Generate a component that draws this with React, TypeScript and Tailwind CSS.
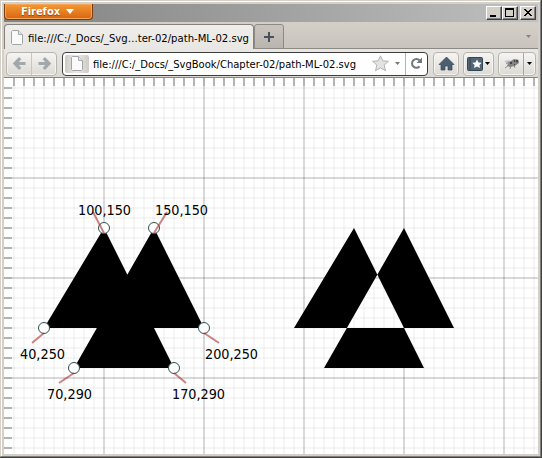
import React from "react";

const range = (n: number) => Array.from({ length: n }, (_, i) => i + 1);
const shape = "M100,150 L170,290 L70,290 L150,150 L200,250 L40,250 Z";
const points = [
  { x: 100, y: 150, lx: 89, ly: 134, label: "100,150", tx: 74, ty: 137 },
  { x: 150, y: 150, lx: 163, ly: 134, label: "150,150", tx: 151, ty: 137 },
  { x: 40, y: 250, lx: 28, ly: 265, label: "40,250", tx: 16, ty: 281 },
  { x: 200, y: 250, lx: 215, ly: 265, label: "200,250", tx: 201, ty: 281 },
  { x: 70, y: 290, lx: 55, ly: 305, label: "70,290", tx: 43, ty: 321 },
  { x: 170, y: 290, lx: 182, ly: 305, label: "170,290", tx: 168, ty: 321 },
];

function PageIcon() {
  return (
    <svg width="12" height="15" viewBox="0 0 12 15" className="shrink-0">
      <path d="M1.500.5h6l4 4v9l-1 1h-9l-1-1v-12z" fill="#fafafa" stroke="#a0a4a7" />
      <path d="M7.500.5v4h4" fill="#e3e3e3" stroke="#a8abad" />
    </svg>
  );
}

function Address({ text, width }: { text: string; width: number }) {
  return (
    <svg width={width} height="16" className="shrink-0">
      <text x="0" y="12" textLength={width} lengthAdjust="spacingAndGlyphs" className="fill-black font-['DejaVu_Sans_Condensed','DejaVu_Sans',sans-serif] text-[11px]">
        {text}
      </text>
    </svg>
  );
}

function Caret({ className = "" }: { className?: string }) {
  return (
    <svg width="5" height="3" viewBox="0 0 5 3" className={`shrink-0 ${className}`}>
      <path d="M0 0h5L2.5 3z" fill="currentColor" />
    </svg>
  );
}

function Arrow({ flip }: { flip?: boolean }) {
  return (
    <svg width="13" height="13" viewBox="0 0 13 13" className={flip ? "-scale-x-100" : ""}>
      <path d="M7.200 1.200 1.900 6.500l5.300 5.300M2.500 6.500H12.500" fill="none" stroke="#a4a7a9" strokeWidth="3.200" />
    </svg>
  );
}

function WindowButton({ children, className = "" }: { children: React.ReactNode; className?: string }) {
  return (
    <div className={`h-[14px] w-4 border border-t-white border-l-white border-r-[#404040] border-b-[#404040] bg-[#d4d0c8] shadow-[inset_-1px_-1px_#808080] ${className}`}>
      <svg width="14" height="12" viewBox="0 0 14 12" shapeRendering="crispEdges">{children}</svg>
    </div>
  );
}

const button = "flex h-6 items-center rounded-[4px] border border-[#b8b5af] bg-linear-to-b from-[#f6f5f3] to-[#dddad5] shadow-[inset_0_0_0_1px_#f4f3f0]";

function Canvas() {
  return (
    <svg width="534" height="376" viewBox="0 0 534 376" className="block bg-white">
      <g stroke="#000" strokeOpacity=".075">
        {range(53).map((i) => <path key={i} d={`M${i * 10} 0V376`} />)}
        {range(37).map((i) => <path key={i} d={`M0 ${i * 10}H534`} />)}
      </g>
      <g stroke="#000" strokeOpacity=".16" strokeWidth="1.5">
        {range(5).map((i) => <path key={i} d={`M${i * 100} 0V376`} />)}
        {range(3).map((i) => <path key={i} d={`M0 ${i * 100}H534`} />)}
      </g>
      <g stroke="#b3b3b3" strokeWidth="2">
        {range(53).map((i) => <path key={i} d={`M${i * 10} 0v8`} />)}
        {range(37).map((i) => <path key={i} d={`M0 ${i * 10}h8`} />)}
      </g>
      <path d={shape} />
      <path d={shape} transform="translate(250 0)" fillRule="evenodd" />
      {points.map((p) => (
        <g key={p.label}>
          <circle cx={p.x} cy={p.y} r="5.5" fill="white" stroke="#2f4f4f" />
          <path d={`M${p.x} ${p.y + 5}L${p.lx} ${p.ly}`} stroke="#a52a2a" strokeOpacity=".58" strokeWidth="2" />
          <text x={p.tx} y={p.ty} textLength={p.label.length === 7 ? 53 : 45} lengthAdjust="spacingAndGlyphs" className="fill-black font-['DejaVu_Sans_Condensed','DejaVu_Sans',sans-serif] text-[14.5px]">{p.label}</text>
        </g>
      ))}
    </svg>
  );
}

export default function App() {
  return (
    <div className="h-[458px] w-[542px] border-r border-b border-[#404040] bg-[#d4d0c8]">
      <div className="flex h-[457px] w-[541px] flex-col border-t border-r border-b border-l border-t-[#d4d0c8] border-l-[#d4d0c8] border-r-[#808080] border-b-[#808080]">
        <div className="flex h-[455px] flex-col border-t border-l border-white pt-[2px] pl-[2px] pr-[2px] pb-[2px]">
          <header className="flex h-[18px] justify-between bg-linear-to-r from-[#828282] to-[#c0c0c0]">
            <div className="flex h-4 w-[89px] items-center justify-center gap-[6px] rounded-b-[4px] border border-t-0 border-[#7b3d0d] bg-linear-to-b from-[#f49a32] to-[#d86410] pr-[2px] shadow-[inset_0_0_0_1px_#f4a55a]">
              <span className="font-['DejaVu_Sans_Condensed','DejaVu_Sans',sans-serif] text-[11px] leading-4 font-bold text-white [text-shadow:0_1px_1px_#8a4510]">Firefox</span>
              <svg width="8" height="5" viewBox="0 0 8 5" className="-mt-px"><path d="M0 0h8L4 5z" fill="white" /></svg>
            </div>
            <div className="flex pt-[2px] pr-[2px]">
              <WindowButton><path d="M3 8h6v2H3z" /></WindowButton>
              <WindowButton><path d="M2.5 1.5h8v8h-8zM2 2.5h9" fill="none" stroke="black" /></WindowButton>
              <WindowButton className="ml-[2px]"><path d="m3.5 2 7 7m0-7-7 7" stroke="black" strokeWidth="1.6" /></WindowButton>
            </div>
          </header>
          <div className="flex h-[27px] items-end bg-linear-to-b from-[#d4d0c8] to-[#c8c4bd] pt-[2px] shadow-[inset_0_-1px_#8d8a85]">
            <div className="flex h-[25px] w-[250px] items-center gap-[5px] rounded-t-[4px] border border-b-0 border-[#85827d] bg-linear-to-b from-[#efeeeb] to-[#e9e7e3] pl-[6px]">
              <PageIcon />
              <div className="pt-px"><Address text="file:///C:/_Docs/_Svg…ter-02/path-ML-02.svg" width={221} /></div>
            </div>
            <div className="flex h-[25px] w-[30px] items-center justify-center rounded-t-[3px] border border-[#8d8a85] bg-linear-to-b from-[#cac6bf] to-[#b9b5ae]">
              <svg width="10" height="10"><path d="M5 0v10M0 5h10" stroke="#46515d" strokeWidth="2" /></svg>
            </div>
            <Caret className="mr-[7px] mb-[11px] ml-auto text-[#85827d]" />
          </div>
          <div className="flex h-[29px] items-center bg-linear-to-b from-[#e9e7e3] to-[#dcd9d3] pl-[2px] shadow-[inset_0_-1px_#858585]">
            <div className={`${button} w-[51px]`}>
              <div className="flex h-full w-[25px] items-center justify-center border-r border-[#c8c5c0]"><Arrow /></div>
              <div className="flex flex-1 justify-center"><Arrow flip /></div>
            </div>
            <div className="ml-[5px] flex h-6 w-[366px] items-center rounded-[4px] border border-[#3d3d3d] bg-white pl-[2px]">
              <div className="mr-1 flex h-[18px] w-6 items-center justify-center rounded-[2px] bg-linear-to-r from-[#cecbc6] via-[#eceae7] to-[#cecbc6]"><PageIcon /></div>
              <div className="pt-px"><Address text="file:///C:/_Docs/_SvgBook/Chapter-02/path-ML-02.svg" width={263} /></div>
              <svg width="17" height="17" viewBox="0 0 17 17" className="ml-4"><path d="m8.500.8 2.300 5 5.600.5-4.200 3.700 1.300 5.800-5-3-5 3L4.800 10 .6 6.300l5.600-.5z" fill="#e3e3e3" stroke="#b3b3b3" /></svg>
              <Caret className="ml-[6px] text-[#777]" />
              <div className="ml-[5px] flex h-full flex-1 items-center justify-center border-l border-[#b2b2b2]">
                <svg width="13" height="13" viewBox="0 0 13 13"><path d="M9.600 9.500A4.400 4.400 0 1 1 9.600 3.300" fill="none" stroke="#72777a" strokeWidth="2" /><path d="M12 .5v5.500H6.500z" fill="#72777a" /></svg>
              </div>
            </div>
            <div className={`${button} ml-[5px] w-[26px] justify-center`}>
              <svg width="17" height="16" viewBox="0 0 17 16"><path d="M8.500 1 16 8.500H14V14h-4v-4H7v4H3V8.500H1z" fill="#4b5f70" stroke="#344454" strokeWidth=".7" /></svg>
            </div>
            <div className={`${button} ml-1 w-[31px] justify-center gap-[2px]`}>
              <svg width="16" height="14" viewBox="0 0 16 14"><rect x=".5" y=".5" width="15" height="13" rx="1" fill="#526675" stroke="#344553" /><path d="M3 1v12" stroke="#344553" /><path d="m10 2.500 1.500 2.900 3.200.3-2.300 2.200.6 3.200-3-1.600-3 1.600.6-3.200-2.300-2.200 3.200-.3z" fill="white" /></svg>
              <Caret className="text-black" />
            </div>
            <div className={`${button} ml-1 w-[38px]`}>
              <div className="flex h-full w-[25px] items-center justify-center border-r border-[#aaa7a1]">
                <svg width="17" height="14" viewBox="0 0 17 14">
                  <path d="m1 4 5-1 4 3-3 3z" fill="#c5c5c5" />
                  <path d="m4 9 2-4 5-3 4 1 1 3-4 3-5 1z" fill="#858585" />
                  <path d="m6 8-4 3m6-3-1 4m4-4 1 3M6 5 3 7" stroke="#777" strokeWidth=".8" />
                  <path d="M7 5h2v2H7zm4-2h1v2h-1zm0 4h1v1h-1z" fill="#454545" />
                  <circle cx="14" cy="4" r="1.500" fill="#4c4c4c" />
                </svg>
              </div>
              <Caret className="mx-auto text-black" />
            </div>
          </div>
          <Canvas />
        </div>
      </div>
    </div>
  );
}
